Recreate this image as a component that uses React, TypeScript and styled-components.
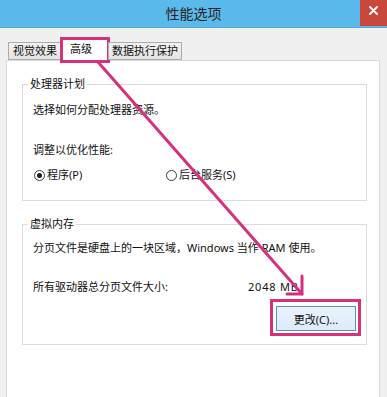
import React from "react";
import styled, { createGlobalStyle } from "styled-components";

const PINK = "#d6317d";

const Global = createGlobalStyle`
  html, body { margin: 0; padding: 0; background: #ffffff; }
  body {
    font-family: "Segoe UI", "Noto Sans", "Noto Sans CJK SC", sans-serif;
    font-size: 11px;
    color: #111111;
  }
  * { box-sizing: border-box; }
`;

const Window = styled.div`
  position: relative;
  width: 387px;
  height: 397px;
  overflow: hidden;
  display: flex;
  flex-direction: column;
  background: #f0f0f0;
`;

const TitleBar = styled.div`
  flex: none;
  height: 28px;
  display: grid;
  grid-template-columns: 27px 1fr 27px;
  background: #5cb9ec;
  border-bottom: 1px solid #4ea9dc;
`;

const Title = styled.div`
  grid-column: 2;
  text-align: center;
  line-height: 27px;
  font-size: 14px;
  color: #262626;
`;

const CloseButton = styled.div`
  grid-column: 3;
  height: 26px;
  background: #c9483e;
  display: flex;
  justify-content: center;
  align-items: flex-start;
  padding-top: 6px;
`;

const Body = styled.div`
  flex: 1;
  display: flex;
  flex-direction: column;
  padding: 10px 7px 0 6px;
`;

const TabRow = styled.div`
  display: flex;
  align-items: flex-end;
  padding-left: 2px;
  position: relative;
  z-index: 1;
`;

const Tab = styled.div<{ $active?: boolean; $pad: string }>`
  position: relative;
  height: ${(p) => (p.$active ? "23px" : "18px")};
  margin-bottom: ${(p) => (p.$active ? "-1px" : "0")};
  margin-left: ${(p) => (p.$active ? "0" : "-1px")};
  padding: ${(p) => p.$pad};
  line-height: ${(p) => (p.$active ? "20px" : "16px")};
  border: 1px solid #acacac;
  border-bottom: ${(p) => (p.$active ? "none" : "1px solid #acacac")};
  background: ${(p) => (p.$active ? "#ffffff" : "linear-gradient(#f2f2f2, #e4e4e4)")};
  color: #111111;
  white-space: nowrap;
  &:first-child { margin-left: 0; }
`;

const TabHighlight = styled.span`
  position: absolute;
  left: -2px;
  right: -2px;
  top: -2px;
  bottom: -2px;
  border: 3px solid ${PINK};
  pointer-events: none;
`;

const Panel = styled.div`
  flex: 1;
  background: #ffffff;
  border: 1px solid #d9d9d9;
  border-bottom: none;
  padding: 15px 12px 0 15px;
  display: flex;
  flex-direction: column;
`;

const Group = styled.fieldset<{ $gap?: number; $bottom: number }>`
  margin: ${(p) => p.$gap ?? 0}px 0 0 0;
  padding: 0 10px ${(p) => p.$bottom}px 10px;
  border: 1px solid #dcdcdc;
  min-width: 0;
  display: flex;
  flex-direction: column;
`;

const Legend = styled.legend`
  padding: 0 2px;
  margin-left: -5px;
  line-height: 16px;
  font-size: 11px;
  color: #111111;
`;

const Line = styled.div<{ $top: number }>`
  margin-top: ${(p) => p.$top}px;
  line-height: 16px;
  white-space: nowrap;
`;

const RadioRow = styled.div`
  margin-top: 9px;
  display: flex;
  align-items: center;
  height: 16px;
`;

const Option = styled.label`
  width: 132px;
  display: flex;
  align-items: center;
  gap: 2px;
  line-height: 16px;
`;

const RadioCircle = styled.span<{ $checked?: boolean }>`
  margin-left: 1px;
  width: 11px;
  height: 11px;
  border-radius: 50%;
  border: 1px solid #3c3c3c;
  background: #ffffff;
  display: flex;
  align-items: center;
  justify-content: center;
  &::after {
    content: "";
    width: 5px;
    height: 5px;
    border-radius: 50%;
    background: ${(p) => (p.$checked ? "#1e1e1e" : "transparent")};
  }
`;

const SizeRow = styled.div`
  margin-top: 23px;
  display: flex;
  line-height: 16px;
`;

const SizeLabel = styled.span`
  width: 215px;
`;

const SizeValue = styled.span`
  letter-spacing: 0.8px;
`;

const ButtonRow = styled.div`
  margin-top: 11px;
  display: flex;
  justify-content: flex-end;
`;

const Button = styled.div`
  position: relative;
  width: 80px;
  height: 25px;
  border: 1px solid #5b8fc2;
  background: linear-gradient(#eaf3fb, #dcebf8);
  display: flex;
  align-items: center;
  justify-content: center;
  color: #111111;
`;

const ButtonHighlight = styled.span`
  position: absolute;
  left: -7px;
  right: -6px;
  top: -8px;
  bottom: -6px;
  border: 3px solid ${PINK};
  pointer-events: none;
`;

const Overlay = styled.svg`
  position: absolute;
  left: 0;
  top: 0;
  pointer-events: none;
  z-index: 5;
`;

export default function App() {
  return (
    <>
      <Global />
      <Window>
        <TitleBar>
          <Title>性能选项</Title>
          <CloseButton>
            <svg width="9" height="9" viewBox="0 0 9 9">
              <path d="M1 1 L8 8 M8 1 L1 8" stroke="#ffffff" strokeWidth="1.8" strokeLinecap="round" />
            </svg>
          </CloseButton>
        </TitleBar>
        <Body>
          <TabRow>
            <Tab $pad="0 3px 0 4px">视觉效果</Tab>
            <Tab $active $pad="0 16px 0 8px">
              高级
              <TabHighlight />
            </Tab>
            <Tab $pad="0 3px 0 3px">数据执行保护</Tab>
          </TabRow>
          <Panel>
            <Group $bottom={17}>
              <Legend>处理器计划</Legend>
              <Line $top={10}>选择如何分配处理器资源。</Line>
              <Line $top={24}>调整以优化性能:</Line>
              <RadioRow>
                <Option>
                  <RadioCircle $checked />
                  程序(P)
                </Option>
                <Option>
                  <RadioCircle />
                  后台服务(S)
                </Option>
              </RadioRow>
            </Group>
            <Group $gap={15} $bottom={13}>
              <Legend>虚拟内存</Legend>
              <Line $top={8}>分页文件是硬盘上的一块区域，Windows 当作 RAM 使用。</Line>
              <SizeRow>
                <SizeLabel>所有驱动器总分页文件大小:</SizeLabel>
                <SizeValue>2048 MB</SizeValue>
              </SizeRow>
              <ButtonRow>
                <Button>
                  更改(C)...
                  <ButtonHighlight />
                </Button>
              </ButtonRow>
            </Group>
          </Panel>
        </Body>
        <Overlay width="387" height="397" viewBox="0 0 387 397">
          <g stroke={PINK} strokeWidth="3" strokeLinecap="round" fill="none">
            <line x1="98" y1="62" x2="302" y2="294" />
            <polyline points="302,276 302,294 287,294" strokeLinejoin="round" />
          </g>
        </Overlay>
      </Window>
    </>
  );
}
